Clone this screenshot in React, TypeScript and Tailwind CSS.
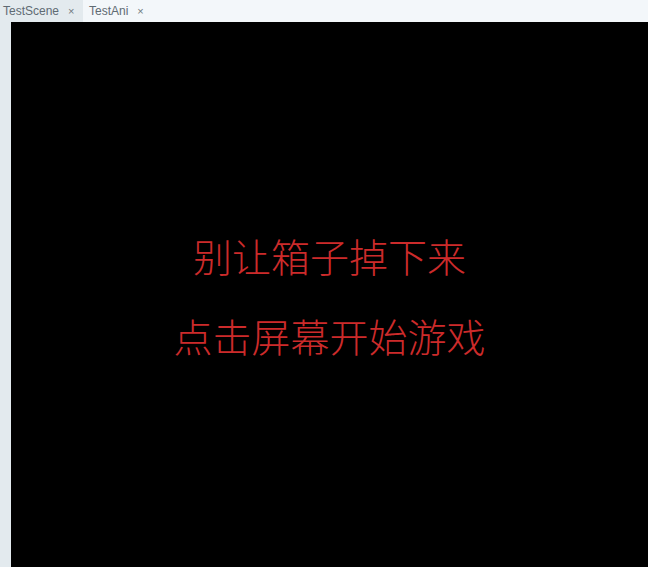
export default function App() {
  return (
    <div className="flex h-[567px] w-[648px] flex-col bg-[#e3eaee]" style={{ fontFamily: '"Liberation Sans", Arial, sans-serif' }}>
      <div className="flex h-[22px] shrink-0 items-center bg-[#f3f7fa] text-[12px] text-[#5f6b73]">
        <div className="flex h-full w-[83px] items-center bg-[#e3eaee] pl-[3px]">
          <span>TestScene</span>
          <span className="ml-[9px] text-[11px] text-[#6f7a80]">×</span>
        </div>
        <div className="flex h-full items-center pl-[6px]">
          <span>TestAni</span>
          <span className="ml-[9px] text-[11px] text-[#6f7a80]">×</span>
        </div>
      </div>
      <div className="flex flex-1 pl-[11px]">
        <div
          className="flex flex-1 flex-col items-center justify-center bg-black text-[39px] leading-[80px] font-light text-[#cc2b2b]"
          style={{ fontFamily: '"Noto Sans CJK SC", "Noto Sans CJK JP", sans-serif' }}
        >
          <div>别让箱子掉下来</div>
          <div>点击屏幕开始游戏</div>
        </div>
      </div>
    </div>
  );
}
